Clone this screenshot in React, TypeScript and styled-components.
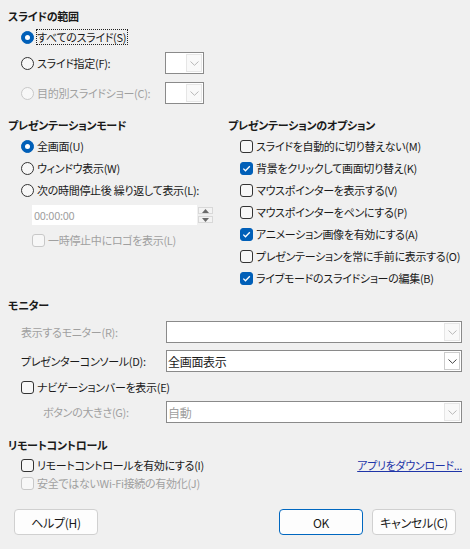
import styled, { createGlobalStyle } from "styled-components";

const GlobalStyle = createGlobalStyle`
  html, body {
    margin: 0;
    padding: 0;
    background: #f0f0f0;
  }
  body {
    font-family: "Noto Sans CJK JP", "Noto Sans", sans-serif;
    font-size: 11px;
    letter-spacing: -0.3px;
    color: #1a1a1a;
    font-feature-settings: "palt";
  }
`;

const colors = {
  TEXT: "#1a1a1a",
  DISABLED: "#a0a0a0",
  ACCENT: "#005fb8",
  BORDER: "#333333",
  BORDER_DISABLED: "#c8c8c8",
  FIELD_BORDER: "#8a8a8a",
  LINK: "#1f35a8",
};

type RowProps = { $h?: number; $mt?: number; $indent?: number };

const Radio = ({ checked = false, disabled = false }: { checked?: boolean; disabled?: boolean }) => (
  <RadioCircle $checked={checked} $disabled={disabled}>
    {checked && <RadioDot />}
  </RadioCircle>
);

const Check = ({ checked = false, disabled = false }: { checked?: boolean; disabled?: boolean }) => (
  <CheckBox $checked={checked} $disabled={disabled}>
    {checked && (
      <svg width="11" height="11" viewBox="0 0 11 11">
        <path d="M2.3 5.6 L4.5 7.8 L8.8 3.3" fill="none" stroke="#fff" strokeWidth="1.3" />
      </svg>
    )}
  </CheckBox>
);

const Chevron = ({ disabled = false }: { disabled?: boolean }) => (
  <svg width="9" height="5" viewBox="0 0 9 5">
    <path d="M0.5 0.5 L4.5 4.3 L8.5 0.5" fill="none" stroke={disabled ? "#b8b8b8" : "#444"} strokeWidth="1" />
  </svg>
);

const Combo = ({ value = "", disabled = false, width }: { value?: string; disabled?: boolean; width?: number }) => (
  <ComboBox $width={width}>
    <ComboValue $disabled={disabled}>{value}</ComboValue>
    <DropButton $disabled={disabled}>
      <Chevron disabled={disabled} />
    </DropButton>
  </ComboBox>
);

const Option = ({ label, checked = false }: { label: string; checked?: boolean }) => (
  <Row $h={22} $indent={12}>
    <Check checked={checked} />
    <Label>{label}</Label>
  </Row>
);

const presentationOptions = [
  { label: "スライドを自動的に切り替えない(M)", checked: false },
  { label: "背景をクリックして画面切り替え(K)", checked: true },
  { label: "マウスポインターを表示する(V)", checked: false },
  { label: "マウスポインターをペンにする(P)", checked: false },
  { label: "アニメーション画像を有効にする(A)", checked: true },
  { label: "プレゼンテーションを常に手前に表示する(O)", checked: false },
  { label: "ライブモードのスライドショーの編集(B)", checked: true },
];

export default function App() {
  return (
    <>
      <GlobalStyle />
      <Dialog>
        <Heading>スライドの範囲</Heading>
        <Row $h={20} $mt={3} $indent={13}>
          <Radio checked />
          <FocusLabel>すべてのスライド(S)</FocusLabel>
        </Row>
        <SlideRow $h={22} $mt={5} $indent={13}>
          <Choice>
            <Radio />
            <Label>スライド指定(F):</Label>
          </Choice>
          <Combo disabled width={39} />
        </SlideRow>
        <SlideRow $h={22} $mt={8} $indent={13}>
          <Choice>
            <Radio disabled />
            <Label $disabled>目的別スライドショー(C):</Label>
          </Choice>
          <Combo disabled width={39} />
        </SlideRow>

        <Columns>
          <Column>
            <Heading>プレゼンテーションモード</Heading>
            <RowList>
              <Row $h={22} $indent={13}>
                <Radio checked />
                <Label>全画面(U)</Label>
              </Row>
              <Row $h={22} $indent={13}>
                <Radio />
                <Label>ウィンドウ表示(W)</Label>
              </Row>
              <Row $h={22} $indent={13}>
                <Radio />
                <Label>次の時間停止後 繰り返して表示(L):</Label>
              </Row>
              <SpinRow>
                <TimeField>00:00:00</TimeField>
                <Spinner>
                  <SpinButton>
                    <svg width="7" height="4" viewBox="0 0 7 4"><path d="M0 4 L3.5 0 L7 4 Z" fill="#6a6a6a" /></svg>
                  </SpinButton>
                  <SpinButton>
                    <svg width="7" height="4" viewBox="0 0 7 4"><path d="M0 0 L3.5 4 L7 0 Z" fill="#6a6a6a" /></svg>
                  </SpinButton>
                </Spinner>
              </SpinRow>
              <Row $h={22} $mt={4} $indent={24}>
                <Check disabled />
                <Label $disabled>一時停止中にロゴを表示(L)</Label>
              </Row>
            </RowList>
          </Column>
          <Column>
            <Heading>プレゼンテーションのオプション</Heading>
            <RowList>
              {presentationOptions.map((o) => (
                <Option key={o.label} label={o.label} checked={o.checked} />
              ))}
            </RowList>
          </Column>
        </Columns>

        <Heading $mt={8}>モニター</Heading>
        <FieldRow $h={22} $mt={8} $indent={13}>
          <Label $disabled $gap={0}>表示するモニター(R):</Label>
          <Combo disabled />
        </FieldRow>
        <FieldRow $h={22} $mt={7} $indent={13}>
          <Label $gap={0}>プレゼンターコンソール(D):</Label>
          <Combo value="全画面表示" />
        </FieldRow>
        <Row $h={22} $mt={4} $indent={13}>
          <Check />
          <Label>ナビゲーションバーを表示(E)</Label>
        </Row>
        <FieldRow $h={22} $mt={3} $indent={35}>
          <Label $disabled $gap={0}>ボタンの大きさ(G):</Label>
          <Combo disabled value="自動" />
        </FieldRow>

        <Heading $mt={14}>リモートコントロール</Heading>
        <RemoteRow $h={18} $mt={3} $indent={13}>
          <Choice>
            <Check />
            <Label>リモートコントロールを有効にする(I)</Label>
          </Choice>
          <Link href="#">アプリをダウンロード...</Link>
        </RemoteRow>
        <Row $h={18} $indent={13}>
          <Check disabled />
          <Label $disabled>安全ではないWi-Fi接続の有効化(J)</Label>
        </Row>

        <ButtonBar>
          <Button>ヘルプ(H)</Button>
          <ButtonGroup>
            <Button $primary>OK</Button>
            <Button>キャンセル(C)</Button>
          </ButtonGroup>
        </ButtonBar>
      </Dialog>
    </>
  );
}

const Dialog = styled.div`
  width: 470px;
  height: 549px;
  box-sizing: border-box;
  padding: 8px 8px 0 8px;
  display: flex;
  flex-direction: column;
  overflow: hidden;
`;

const Heading = styled.div<{ $mt?: number }>`
  height: 16px;
  line-height: 16px;
  font-weight: 700;
  margin-top: ${(p) => p.$mt ?? 0}px;
  white-space: nowrap;
`;

const Row = styled.div<RowProps>`
  display: flex;
  align-items: center;
  height: ${(p) => p.$h ?? 22}px;
  margin-top: ${(p) => p.$mt ?? 0}px;
  padding-left: ${(p) => p.$indent ?? 0}px;
  white-space: nowrap;
`;

const SlideRow = styled(Row)`
  display: grid;
  grid-template-columns: 144px 39px;
  align-items: stretch;
`;

const FieldRow = styled(Row)`
  display: grid;
  grid-template-columns: ${(p) => 158 - (p.$indent ?? 0)}px 1fr;
  align-items: center;
  height: 22px;
  & > :last-child {
    height: 22px;
  }
`;

const RemoteRow = styled(Row)`
  justify-content: space-between;
`;

const Choice = styled.div`
  display: flex;
  align-items: center;
`;

const Label = styled.span<{ $disabled?: boolean; $gap?: number }>`
  margin-left: ${(p) => p.$gap ?? 3}px;
  color: ${(p) => (p.$disabled ? colors.DISABLED : colors.TEXT)};
  line-height: 16px;
`;

const FocusLabel = styled.span`
  margin-left: 2px;
  padding: 0 1px 0 0;
  border: 1px dotted #222;
  line-height: 14px;
`;

const RadioCircle = styled.span<{ $checked: boolean; $disabled: boolean }>`
  width: 13px;
  height: 13px;
  box-sizing: border-box;
  border-radius: 50%;
  flex-shrink: 0;
  display: flex;
  align-items: center;
  justify-content: center;
  background: ${(p) => (p.$checked ? colors.ACCENT : "#f7f7f7")};
  border: 1px solid
    ${(p) => (p.$checked ? colors.ACCENT : p.$disabled ? colors.BORDER_DISABLED : colors.BORDER)};
`;

const RadioDot = styled.span`
  width: 5px;
  height: 5px;
  border-radius: 50%;
  background: #fff;
`;

const CheckBox = styled.span<{ $checked: boolean; $disabled: boolean }>`
  width: 13px;
  height: 13px;
  box-sizing: border-box;
  border-radius: 3px;
  flex-shrink: 0;
  display: flex;
  align-items: center;
  justify-content: center;
  background: ${(p) => (p.$checked ? colors.ACCENT : "#f7f7f7")};
  border: 1px solid
    ${(p) => (p.$checked ? colors.ACCENT : p.$disabled ? colors.BORDER_DISABLED : colors.BORDER)};
`;

const ComboBox = styled.div<{ $width?: number }>`
  box-sizing: border-box;
  width: ${(p) => (p.$width ? `${p.$width}px` : "100%")};
  height: 100%;
  border: 1px solid ${colors.FIELD_BORDER};
  background: #fff;
  display: flex;
  align-items: stretch;
`;

const ComboValue = styled.div<{ $disabled: boolean }>`
  flex: 1;
  padding-left: 1px;
  display: flex;
  align-items: center;
  font-size: 12px;
  color: ${(p) => (p.$disabled ? colors.DISABLED : colors.TEXT)};
  overflow: hidden;
`;

const DropButton = styled.div<{ $disabled: boolean }>`
  width: 16px;
  margin: 1px;
  box-sizing: border-box;
  border: 1px solid ${(p) => (p.$disabled ? "#e6e6e6" : "#cccccc")};
  background: ${(p) => (p.$disabled ? "#f9f9f9" : "#fff")};
  display: flex;
  align-items: center;
  justify-content: center;
`;

const Columns = styled.div`
  display: grid;
  grid-template-columns: 220px 1fr;
  margin-top: 13px;
  height: 172px;
`;

const Column = styled.div`
  display: flex;
  flex-direction: column;
`;

const RowList = styled.div`
  display: flex;
  flex-direction: column;
  margin-top: 2px;
`;

const SpinRow = styled.div`
  display: flex;
  align-items: center;
  gap: 1px;
  margin-top: 4px;
  padding-left: 24px;
  height: 20px;
`;

const TimeField = styled.div`
  width: 165px;
  height: 20px;
  box-sizing: border-box;
  background: #fff;
  color: ${colors.DISABLED};
  padding-left: 2px;
  display: flex;
  align-items: center;
`;

const Spinner = styled.div`
  width: 15px;
  height: 16px;
  display: flex;
  flex-direction: column;
  gap: 2px;
`;

const SpinButton = styled.div`
  flex: 1;
  box-sizing: border-box;
  border: 1px solid #d8d8d8;
  background: #f3f3f3;
  display: flex;
  align-items: center;
  justify-content: center;
`;

const Link = styled.a`
  color: ${colors.LINK};
  text-decoration: underline;
  line-height: 16px;
`;

const ButtonBar = styled.div`
  display: flex;
  justify-content: space-between;
  margin-top: 17px;
  padding: 0 6px;
`;

const ButtonGroup = styled.div`
  display: flex;
  gap: 9px;
`;

const Button = styled.button<{ $primary?: boolean }>`
  width: 84px;
  height: 26px;
  box-sizing: border-box;
  border-radius: 4px;
  border: 1px solid ${(p) => (p.$primary ? "#0067c0" : "#d0d0d0")};
  background: #fdfdfd;
  font-family: inherit;
  font-size: 12px;
  letter-spacing: -0.3px;
  font-feature-settings: "palt";
  color: ${colors.TEXT};
  padding: 0;
`;
